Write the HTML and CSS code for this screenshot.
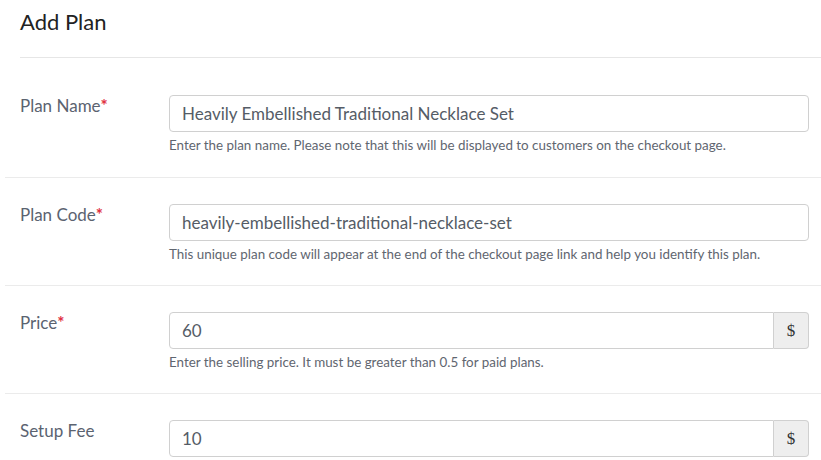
FILE: index.html
```html
<!DOCTYPE html>
<html lang="en">
<head>
  <meta charset="UTF-8" />
  <title>Add Plan</title>
  <link rel="stylesheet" href="styles.css">
</head>
<body>
  <div class="panel">
    <div class="panel-head">
      <h2>Add Plan</h2>
    </div>

    <div class="form-row first">
      <label class="form-label">Plan Name<span class="req">*</span></label>
      <div class="form-field">
        <input class="text-input" value="Heavily Embellished Traditional Necklace Set" />
        <p class="help">Enter the plan name. Please note that this will be displayed to customers on the checkout page.</p>
      </div>
    </div>

    <div class="form-row">
      <label class="form-label">Plan Code<span class="req">*</span></label>
      <div class="form-field">
        <input class="text-input" value="heavily-embellished-traditional-necklace-set" />
        <p class="help">This unique plan code will appear at the end of the checkout page link and help you identify this plan.</p>
      </div>
    </div>

    <div class="form-row">
      <label class="form-label">Price<span class="req">*</span></label>
      <div class="form-field">
        <div class="input-group">
          <input class="text-input" value="60" />
          <span class="addon">$</span>
        </div>
        <p class="help">Enter the selling price. It must be greater than 0.5 for paid plans.</p>
      </div>
    </div>

    <div class="form-row">
      <label class="form-label">Setup Fee</label>
      <div class="form-field">
        <div class="input-group">
          <input class="text-input" value="10" />
          <span class="addon">$</span>
        </div>
      </div>
    </div>
  </div>
</body>
</html>
```

FILE: styles.css
```css
/*── base ──*/
body {
  margin: 0;
  background: #fff;
  font-family: Lato, "Open Sans", sans-serif;
  color: #5b6370;
}
.panel {
  padding-left: 5px;
}
/*── header ──*/
.panel-head {
  margin-left: 15px;
  height: 58px;
  border-bottom: 1px solid #e6e6e6;
  box-sizing: border-box;
  margin-bottom: 11px;
}
.panel-head h2 {
  margin: 0;
  padding-top: 8px;
  font-size: 22px;
  font-weight: 400;
  color: #222;
}
/*── rows ──*/
.form-row {
  display: flex;
  height: 108px;
  padding: 26px 12px 0 15px;
  border-top: 1px solid #ebebeb;
  box-sizing: border-box;
}
.form-row.first {
  border-top: none;
}
.form-label {
  width: 149px;
  flex-shrink: 0;
  padding-top: 0;
  font-size: 17px;
}
.req {
  color: #e0303f;
  font-weight: 700;
}
.form-field {
  flex: 1;
}
.text-input {
  width: 100%;
  height: 37px;
  padding: 0 12px;
  border: 1px solid #d0d0d0;
  border-radius: 4px;
  font-family: inherit;
  font-size: 17px;
  color: #555c66;
  box-sizing: border-box;
  outline: none;
}
.help {
  margin: 5px 0 0;
  font-size: 13.4px;
  color: #5f6670;
}
.input-group {
  display: flex;
}
.input-group .text-input {
  border-radius: 4px 0 0 4px;
}
.addon {
  width: 35px;
  flex-shrink: 0;
  display: flex;
  align-items: center;
  justify-content: center;
  background: #eeeeee;
  border: 1px solid #d0d0d0;
  border-left: none;
  border-radius: 0 4px 4px 0;
  font-family: "Liberation Serif", serif;
  font-size: 17px;
  color: #333;
  box-sizing: border-box;
}
```
